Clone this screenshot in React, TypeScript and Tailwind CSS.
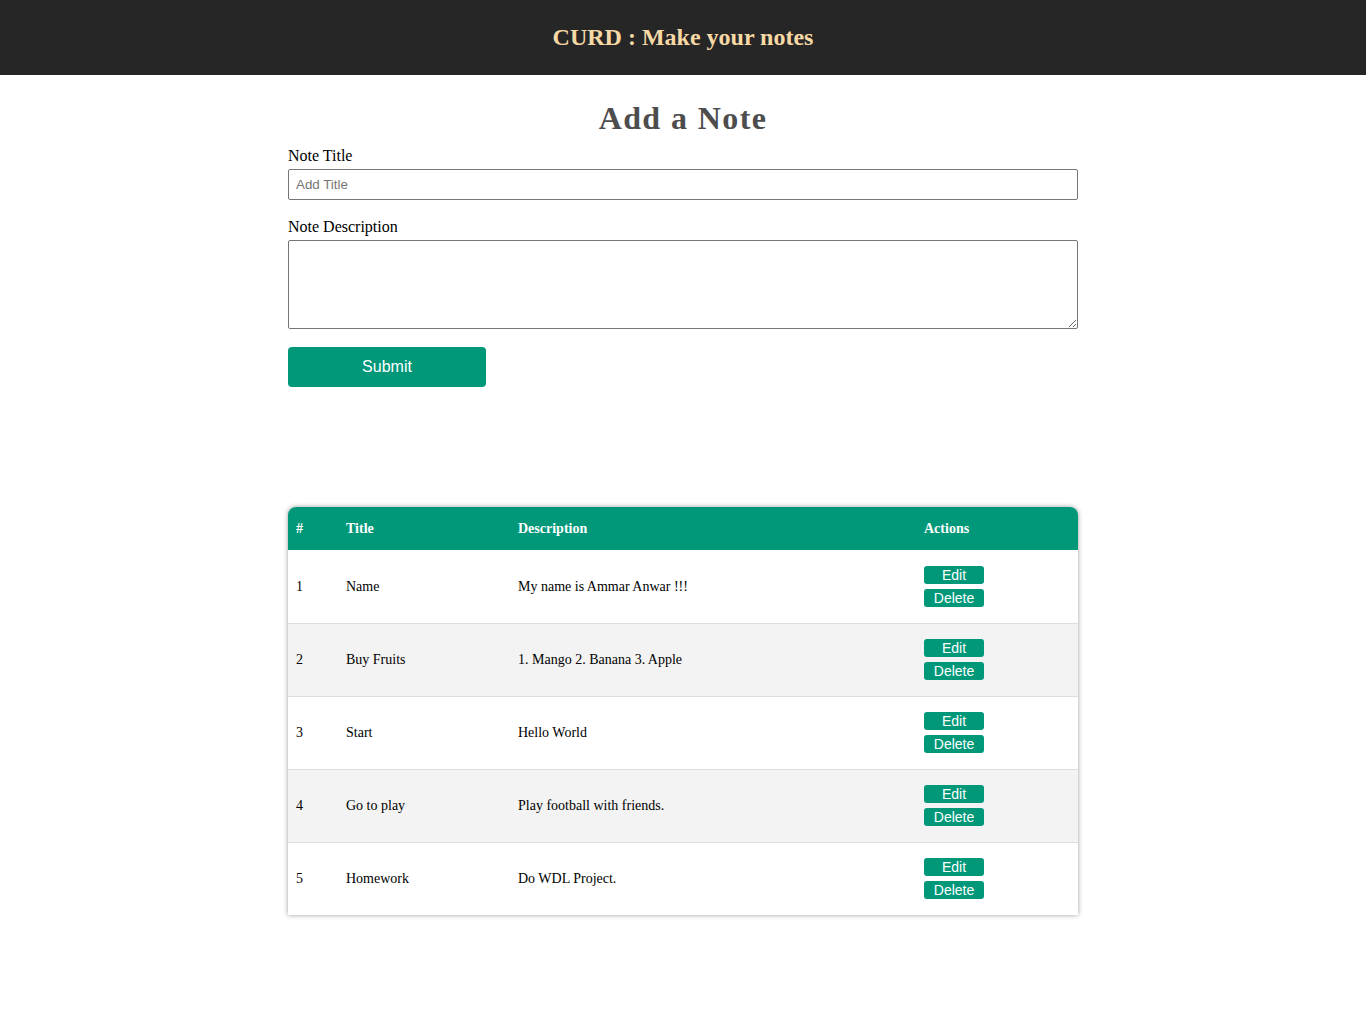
import React from "react";

const notes = [
  { id: 1, title: "Name", desc: "My name is Ammar Anwar !!!" },
  { id: 2, title: "Buy Fruits", desc: "1. Mango 2. Banana 3. Apple" },
  { id: 3, title: "Start", desc: "Hello World" },
  { id: 4, title: "Go to play", desc: "Play football with friends." },
  { id: 5, title: "Homework", desc: "Do WDL Project." },
];

export default function App() {
  return (
    <div className="min-h-[1035px] bg-white font-['Liberation_Serif',serif] text-black">
      <header className="h-[75px] bg-[#262626] flex items-center justify-center pb-[2px]">
        <h1 className="text-[24px] font-bold text-[#f7d9a6] leading-none">CURD : Make your notes</h1>
      </header>
      <main className="w-[790px] mx-auto">
        <h2 className="text-[32px] font-bold text-[#4d4d4d] text-center tracking-[1.4px] leading-none pt-[27px]">Add a Note</h2>
        <div className="mt-[13px]">
          <label className="block text-[16px] leading-[18px]">Note Title</label>
          <input
            type="text"
            placeholder="Add Title"
            className="mt-[4px] block w-full h-[31px] border border-[#767676] rounded-[2px] px-[7px] font-['Liberation_Sans',sans-serif] text-[13.33px] placeholder:text-[#757575] outline-none"
          />
          <label className="block text-[16px] leading-[18px] mt-[18px]">Note Description</label>
          <textarea className="mt-[4px] block w-full h-[89px] border border-[#767676] rounded-[2px] px-[7px] py-[4px] font-['Liberation_Sans',sans-serif] text-[13px] outline-none" />
          <button className="mt-[18px] w-[198px] h-[40px] bg-[#009879] text-white rounded-[4px] font-['Liberation_Sans',sans-serif] text-[16px]">
            Submit
          </button>
        </div>
        <div className="mt-[120px] rounded-t-[8px] overflow-hidden shadow-[0_0_5px_rgba(0,0,0,0.4)]">
          <table className="w-full border-collapse text-[14px]">
            <thead>
              <tr className="bg-[#009879] text-white text-left h-[43px]">
                <th className="w-[50px] pl-[8px] font-bold">#</th>
                <th className="w-[172px] pl-[8px] font-bold">Title</th>
                <th className="w-[406px] pl-[8px] font-bold">Description</th>
                <th className="pl-[8px] font-bold">Actions</th>
              </tr>
            </thead>
            <tbody>
              {notes.map((n, i) => (
                <tr
                  key={n.id}
                  className={`h-[73px] ${i % 2 === 1 ? "bg-[#f3f3f3]" : "bg-white"} ${i < notes.length - 1 ? "border-b border-[#dddddd]" : ""}`}
                >
                  <td className="pl-[8px]">{n.id}</td>
                  <td className="pl-[8px]">{n.title}</td>
                  <td className="pl-[8px]">{n.desc}</td>
                  <td className="pl-[8px]">
                    <div className="flex flex-col gap-[5px]">
                      <button className="w-[60px] h-[18px] bg-[#009879] text-white rounded-[3px] font-['Liberation_Sans',sans-serif] text-[14px] leading-[18px]">
                        Edit
                      </button>
                      <button className="w-[60px] h-[18px] bg-[#009879] text-white rounded-[3px] font-['Liberation_Sans',sans-serif] text-[14px] leading-[18px]">
                        Delete
                      </button>
                    </div>
                  </td>
                </tr>
              ))}
            </tbody>
          </table>
        </div>
      </main>
    </div>
  );
}
